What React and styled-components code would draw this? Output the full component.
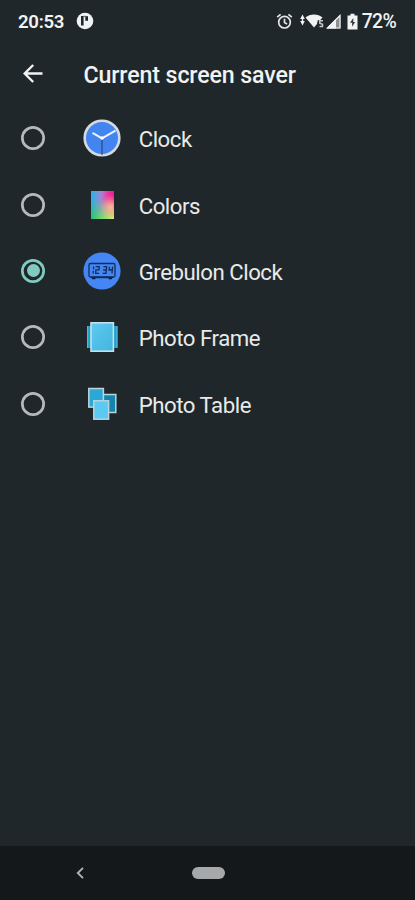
import React, { useState } from 'react';
import styled, { createGlobalStyle } from 'styled-components';

const GlobalStyle = createGlobalStyle`
  * {
    box-sizing: border-box;
  }

  body {
    margin: 0;
    background-color: #20272a;
    font-family: Roboto, sans-serif;
  }
`;

const StyledScreen = styled.div`
  display: flex;
  flex-direction: column;
  width: 415px;
  height: 900px;
  overflow: hidden;
  background-color: #20272a;
  color: #f1f3f3;
`;

const StyledStatusBar = styled.div`
  display: flex;
  align-items: center;
  justify-content: space-between;
  height: 42px;
  padding: 0 19px 0 18px;
`;

const StyledStatusGroup = styled.div`
  display: flex;
  align-items: center;
  gap: ${({ $gap }) => $gap}px;

  > svg {
    display: block;
  }
`;

const StyledStatusText = styled.span`
  padding-top: 1px;
  font-size: ${({ $size }) => $size}px;
  font-weight: ${({ $weight }) => $weight};
  line-height: 20px;
  letter-spacing: ${({ $spacing }) => $spacing}px;
`;

const StyledHeader = styled.header`
  display: flex;
  align-items: center;
  gap: 38.5px;
  height: 63px;
  padding-left: 21px;
`;

const StyledBackButton = styled.button`
  display: flex;
  width: 24px;
  height: 24px;
  padding: 0;
  border: 0;
  background: none;
  color: #f1f3f3;
`;

const StyledTitle = styled.h1`
  margin: 0;
  padding-top: 2px;
  font-size: 23.2px;
  font-weight: 500;
  line-height: 28px;
  letter-spacing: -0.12px;
  white-space: nowrap;
`;

const StyledList = styled.ul`
  flex: 1;
  margin: 0;
  padding: 0;
  list-style: none;
`;

const StyledListItem = styled.li`
  display: flex;
  align-items: center;
  height: 66.35px;
  padding-left: 21px;
`;

const StyledRadio = styled.span`
  display: flex;
  align-items: center;
  justify-content: center;
  width: 24px;
  height: 24px;
  border-radius: 50%;
  box-shadow: inset 0 0 0 2.7px ${({ $checked }) => ($checked ? '#80cbc0' : '#b6b9ba')};
`;

const StyledRadioDot = styled.span`
  width: 13px;
  height: 13px;
  border-radius: 50%;
  background-color: #80cbc0;
`;

const StyledIcon = styled.span`
  display: flex;
  margin: 0 17px 0 36.7px;
`;

const StyledLabel = styled.span`
  padding-top: 2.4px;
  font-size: 22.2px;
  line-height: 28px;
  letter-spacing: -0.46px;
  color: #e8eaea;
  white-space: nowrap;
`;

const StyledNavBar = styled.nav`
  display: grid;
  grid-template-columns: 160px 96px 159px;
  align-items: center;
  justify-items: center;
  height: 54px;
  background-color: #14181a;
`;

const StyledHomePill = styled.span`
  width: 33px;
  height: 12px;
  border-radius: 6px;
  background-color: #a6a8a9;
`;

const ClockIcon = () => (
  <svg width="40" height="40" viewBox="0 0 40 40">
    <circle cx="20" cy="20" r="17.3" fill="#4285f0" stroke="#d5dae2" strokeWidth="2.6" />
    <path d="M20 20v17" stroke="#2d4672" strokeWidth="1.2" />
    <path d="M10.5 14.8 20 20.3 33.5 12.6" fill="none" stroke="#eef3fb" strokeWidth="2" />
    <circle cx="20" cy="20" r="1.8" fill="#fff" />
  </svg>
);

const ColorsIcon = () => (
  <svg width="40" height="40" viewBox="0 0 40 40">
    <defs>
      <linearGradient id="colorsTop">
        <stop offset="0" stopColor="#21b7e8" />
        <stop offset="0.45" stopColor="#a684d4" />
        <stop offset="0.75" stopColor="#f0329c" />
        <stop offset="1" stopColor="#ec1c8c" />
      </linearGradient>
      <linearGradient id="colorsBottom">
        <stop offset="0" stopColor="#27bd7c" />
        <stop offset="0.5" stopColor="#7adb72" />
        <stop offset="1" stopColor="#d3ec62" />
      </linearGradient>
      <linearGradient id="colorsFade" x1="0" y1="0" x2="0" y2="1">
        <stop offset="0.3" stopColor="#fff" stopOpacity="0" />
        <stop offset="0.95" stopColor="#fff" />
      </linearGradient>
      <radialGradient id="colorsGlow" cx="0.85" cy="0.58" r="0.45">
        <stop offset="0" stopColor="#ffc79a" stopOpacity="0.8" />
        <stop offset="1" stopColor="#ffc79a" stopOpacity="0" />
      </radialGradient>
      <mask id="colorsMask">
        <path d="M9 6h23v28H9z" fill="url(#colorsFade)" />
      </mask>
    </defs>
    <path d="M9 6h23v28H9z" fill="url(#colorsTop)" />
    <path d="M9 6h23v28H9z" fill="url(#colorsBottom)" mask="url(#colorsMask)" />
    <path d="M9 6h23v28H9z" fill="url(#colorsGlow)" />
  </svg>
);

const GrebulonIcon = () => (
  <svg width="40" height="40" viewBox="0 0 40 40">
    <circle cx="20" cy="20" r="18.6" fill="#4486f4" />
    <g fill="none" stroke="#122c5c" strokeWidth="1.3">
      <rect x="7" y="12.5" width="26" height="13.5" rx="1.5" />
      <path d="M11.6 15.6v2.6M11.2 19.8v2.6" />
      <path d="M13.6 15.6h3.6l-.3 3.3h-3l-.3 3.5h3.4" />
      <path d="M21.4 15.6h3.2l-.6 6.8h-3.4M21.2 19h3" />
      <path d="M27.4 15.8l-.3 3.2h3M30.6 15.6l-.6 6.8" />
    </g>
    <path d="M9 26h5.4L13 28.2h-2.6zM25.6 26H31l-1.4 2.2H27z" fill="#081836" />
    <path d="M10 26.5h20" stroke="#10295a" strokeWidth="1.4" />
  </svg>
);

const PhotoFrameIcon = () => (
  <svg width="40" height="40" viewBox="0 0 40 40">
    <defs>
      <linearGradient id="frameFill" x1="0" y1="0" x2="1" y2="1">
        <stop offset="0" stopColor="#5fcaf0" />
        <stop offset="1" stopColor="#41b5df" />
      </linearGradient>
    </defs>
    <path d="M5 9h30.5v22H5z" fill="#1c9dcb" />
    <path d="M5 9h1.2v22H5zM34.3 9h1.2v22h-1.2z" fill="#51b9db" />
    <rect x="9" y="5.8" width="22.4" height="28.4" fill="url(#frameFill)" stroke="#c2e1ea" strokeWidth="1.6" />
  </svg>
);

const PhotoTableIcon = () => (
  <svg width="40" height="40" viewBox="0 0 40 40" stroke="#b8d4dd" strokeWidth="1.5">
    <rect x="20" y="10.5" width="13.8" height="18" fill="#1584ad" />
    <rect x="6.8" y="4.5" width="14.6" height="18.6" fill="#2ba8d5" />
    <rect x="11.8" y="16.8" width="14.8" height="18.4" fill="#5bc9f2" />
  </svg>
);

const BackArrow = () => (
  <svg width="24" height="24" viewBox="0 0 24 24" fill="none" stroke="currentColor" strokeWidth="2.4">
    <path d="M21.5 11.5H4M12.2 3 3.7 11.5 12.2 20" />
  </svg>
);

const NotificationIcon = () => (
  <svg width="18" height="18" viewBox="0 0 18 18">
    <circle cx="9" cy="9" r="8.3" fill="#f1f3f3" />
    <path d="M5 4h2.6v9.5H5z" fill="#20272a" />
    <path d="M9.3 4.2H12v4.6H9.3z" fill="#20272a" />
    <path d="M7.5 4.3h2" stroke="#20272a" strokeWidth="0.8" />
  </svg>
);

const AlarmIcon = () => (
  <svg width="17" height="17" viewBox="0 0 17 17" fill="none" stroke="#e4e7e7" strokeWidth="1.7">
    <circle cx="8.5" cy="9.2" r="5.8" />
    <path d="M1.2 4.2 4.6 1.3M15.8 4.2l-3.4-2.9M8.5 5.8v3.7l2.6 1.6" />
  </svg>
);

const WifiIcon = () => (
  <svg width="27" height="16" viewBox="0 0 27 16" fill="#f1f3f3">
    <path d="M3.5 1.5 5.8 6H1.2zM3.5 12.5 5.8 8H1.2z" />
    <path d="M2.8 5h1.4v4H2.8z" />
    <path d="M6.5 4.5C11 .6 19 .6 23.5 4.5L21.3 7l-2.5.3L18 11l-3 3.5z" />
    <path d="M24 7.8h-3.2v2.5l2.7 1v2.3h-3" fill="none" stroke="#c5c8c9" strokeWidth="1.5" />
  </svg>
);

const SignalIcon = () => (
  <svg width="15" height="15" viewBox="0 0 15 15">
    <path d="M.5 14.5 14.5.5v14z" fill="#8b9092" />
    <path d="M.5 14.5 10 5v9.5z" fill="#f1f3f3" />
    <path d="M1.5 14 14 1.5V14z" fill="none" stroke="#f1f3f3" strokeWidth="1.2" />
  </svg>
);

const BatteryIcon = () => (
  <svg width="11" height="17" viewBox="0 0 11 17">
    <path d="M3.5.8h4v1.7h3v14H.5v-14h3z" fill="#f1f3f3" />
    <path d="M6.3 5 3 9.8h2.1v4L8.2 9H6.3z" fill="#353c3f" />
  </svg>
);

const ChevronIcon = () => (
  <svg width="10" height="14" viewBox="0 0 10 14" fill="none" stroke="#b0b3b4" strokeWidth="1.9">
    <path d="M8 1.8 2.8 7 8 12.2" />
  </svg>
);

const savers = [
  { name: 'Clock', Icon: ClockIcon },
  { name: 'Colors', Icon: ColorsIcon },
  { name: 'Grebulon Clock', Icon: GrebulonIcon },
  { name: 'Photo Frame', Icon: PhotoFrameIcon },
  { name: 'Photo Table', Icon: PhotoTableIcon },
];

const SaverListItem = ({ name, Icon, checked, onSelect }) => {
  return (
    <StyledListItem role="radio" aria-checked={checked} onClick={onSelect}>
      <StyledRadio $checked={checked}>{checked && <StyledRadioDot />}</StyledRadio>
      <StyledIcon>
        <Icon />
      </StyledIcon>
      <StyledLabel>{name}</StyledLabel>
    </StyledListItem>
  );
};

const App = () => {
  const [selected, setSelected] = useState('Grebulon Clock');

  return (
    <StyledScreen>
      <GlobalStyle />
      <StyledStatusBar>
        <StyledStatusGroup $gap={12}>
          <StyledStatusText $size={18.6} $weight={600} $spacing={-0.3}>
            20:53
          </StyledStatusText>
          <NotificationIcon />
        </StyledStatusGroup>
        <StyledStatusGroup $gap={4}>
          <StyledStatusGroup $gap={6}>
            <AlarmIcon />
            <StyledStatusGroup $gap={0}>
              <WifiIcon />
              <SignalIcon />
            </StyledStatusGroup>
            <BatteryIcon />
          </StyledStatusGroup>
          <StyledStatusText $size={19.4} $weight={500} $spacing={-0.7}>
            72%
          </StyledStatusText>
        </StyledStatusGroup>
      </StyledStatusBar>
      <StyledHeader>
        <StyledBackButton aria-label="Back">
          <BackArrow />
        </StyledBackButton>
        <StyledTitle>Current screen saver</StyledTitle>
      </StyledHeader>
      <StyledList role="radiogroup">
        {savers.map(({ name, Icon }) => (
          <SaverListItem
            key={name}
            name={name}
            Icon={Icon}
            checked={name === selected}
            onSelect={() => setSelected(name)}
          />
        ))}
      </StyledList>
      <StyledNavBar>
        <ChevronIcon />
        <StyledHomePill />
      </StyledNavBar>
    </StyledScreen>
  );
};

export default App;
